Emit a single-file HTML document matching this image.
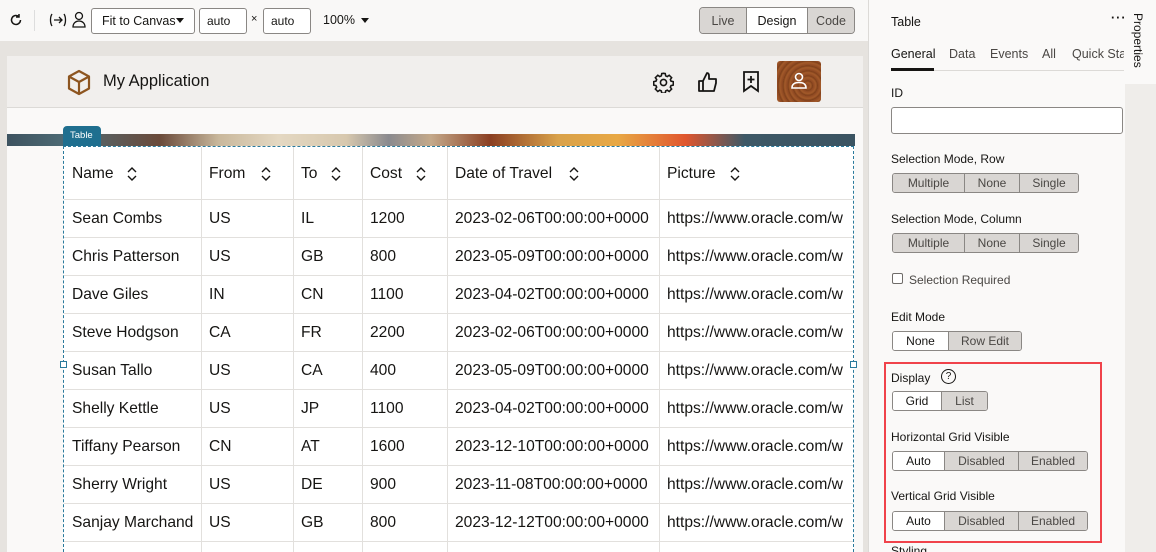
<!DOCTYPE html>
<html><head><meta charset="utf-8"><style>
*{box-sizing:border-box;margin:0;padding:0}
html,body{width:1156px;height:552px;overflow:hidden}
body{position:relative;font-family:"Liberation Sans",sans-serif;background:#e6e3df;color:#161513}
.a{position:absolute}
.t{font-size:12.5px;white-space:nowrap}
.seg{position:absolute;display:flex;height:20px;border:1px solid #8a8784;border-radius:3px;overflow:hidden;font-size:12px}
.seg div{background:#d9d6d3;color:#4a4744;display:flex;align-items:center;justify-content:center;border-left:1px solid #8a8784}
.seg div:first-child{border-left:none}
.seg div.on{background:#fff;color:#161513}
.lbl{position:absolute;font-size:12px;color:#161513}
.cell{position:absolute;font-size:15.6px;color:#161513;white-space:nowrap}
.srt{position:absolute}
</style></head><body>
<!-- toolbar -->
<div class="a" style="left:0;top:0;width:869px;height:41px;background:#f9f8f7"></div>
<svg class="a" style="left:9px;top:13px" width="14" height="14" viewBox="0 0 14 14"><path d="M11.5 7a4.5 4.5 0 1 1-1.5-3.4" fill="none" stroke="#161513" stroke-width="1.5"/><path d="M10 1v3h-3" fill="none" stroke="#161513" stroke-width="1.5"/></svg>
<div class="a" style="left:34px;top:10px;width:1px;height:21px;background:#ddd"></div>
<svg class="a" style="left:49px;top:13px" width="18" height="14" viewBox="0 0 18 14"><path d="M3 1C1 4 1 10 3 13 M15 1c2 3 2 9 0 12 M5 7h8 M10 4l3 3-3 3" fill="none" stroke="#161513" stroke-width="1.3"/></svg>
<svg class="a" style="left:72px;top:11px" width="14" height="17" viewBox="0 0 14 17"><circle cx="7" cy="5" r="3.5" fill="none" stroke="#161513" stroke-width="1.3"/><path d="M1 16c0-4 3-6 6-6s6 2 6 6z" fill="none" stroke="#161513" stroke-width="1.3"/></svg>
<div class="a" style="left:91px;top:8px;width:104px;height:26px;border:1px solid #8a8784;border-radius:3px;background:#fff"></div>
<div class="a t" style="left:102px;top:14px">Fit to Canvas</div>
<div class="a" style="left:176px;top:18px;border:4px solid transparent;border-top:5px solid #161513"></div>
<div class="a" style="left:199px;top:8px;width:48px;height:26px;border:1px solid #8a8784;border-radius:3px;background:#fff"></div>
<div class="a t" style="left:207px;top:14px;font-size:12px">auto</div>
<div class="a t" style="left:251px;top:13px;font-size:11px">×</div>
<div class="a" style="left:263px;top:8px;width:48px;height:26px;border:1px solid #8a8784;border-radius:3px;background:#fff"></div>
<div class="a t" style="left:271px;top:14px;font-size:12px">auto</div>
<div class="a t" style="left:323px;top:13px;font-size:12.5px">100%</div>
<div class="a" style="left:361px;top:18px;border:4px solid transparent;border-top:5px solid #161513"></div>
<div class="seg" style="left:699px;top:7px;height:27px;font-size:12.5px;border-radius:4px"><div style="width:46px">Live</div><div class="on" style="width:61px">Design</div><div style="width:47px">Code</div></div>
<!-- app -->
<div class="a" style="left:7px;top:56px;width:856px;height:496px;background:#faf9f8"></div>
<div class="a" style="left:7px;top:56px;width:856px;height:52px;background:#f1efed;border-bottom:1px solid #dcdad7"></div>
<svg class="a" style="left:66px;top:69px" width="26" height="27" viewBox="0 0 26 27"><path d="M13 2l10 5.5v12L13 25 3 19.5v-12z M3 7.5l10 5.5 10-5.5 M13 13v12" fill="none" stroke="#8d5520" stroke-width="2.2" stroke-linejoin="round"/></svg>
<div class="a" style="left:103px;top:72px;font-size:16.5px">My Application</div>
<svg class="a" style="left:653px;top:72px" width="21" height="21" viewBox="0 0 24 24"><path d="M12 1.5l2 .3.5 2.6 1.8.8 2.2-1.5 2.8 2.8-1.5 2.2.8 1.8 2.6.5v4l-2.6.5-.8 1.8 1.5 2.2-2.8 2.8-2.2-1.5-1.8.8-.5 2.6h-4l-.5-2.6-1.8-.8-2.2 1.5-2.8-2.8 1.5-2.2-.8-1.8-2.6-.5v-4l2.6-.5.8-1.8-1.5-2.2 2.8-2.8 2.2 1.5 1.8-.8.5-2.6z" fill="none" stroke="#161513" stroke-width="1.8"/><circle cx="12" cy="12" r="3.5" fill="none" stroke="#161513" stroke-width="1.8"/></svg>
<svg class="a" style="left:697px;top:71px" width="22" height="22" viewBox="0 0 22 22"><path d="M2 10h4v10H2z M6 10l4-8c2 0 2 2 2 3v3h7v4l-2 8H6" fill="none" stroke="#161513" stroke-width="1.8" stroke-linejoin="round"/></svg>
<svg class="a" style="left:742px;top:71px" width="18" height="22" viewBox="0 0 18 22"><path d="M2 1h14v19l-7-5-7 5z M9 5v7 M5.5 8.5h7" fill="none" stroke="#161513" stroke-width="1.8"/></svg>
<div class="a" style="left:777px;top:61px;width:44px;height:41px;border-radius:3px;background:repeating-radial-gradient(circle at 70% 60%,#8a4520 0,#a35a2a 3px,#7a3d18 5px)"></div>
<svg class="a" style="left:790px;top:71px" width="18" height="20" viewBox="0 0 18 20"><circle cx="9" cy="6" r="3.5" fill="none" stroke="#fff" stroke-width="1.6"/><path d="M2 17c0-4 3-5.5 7-5.5s7 1.5 7 5.5z" fill="none" stroke="#fff" stroke-width="1.6"/></svg>
<!-- banner -->
<div class="a" style="left:7px;top:134px;width:848px;height:12px;background:linear-gradient(90deg,#3d5360 0,#4e6b75 7%,#6a4a3a 18%,#c9b89c 25%,#e4d8c2 32%,#d7c8ae 40%,#8a8a8e 45%,#c4a98a 50%,#8a3f22 57%,#d9a24a 65%,#e8a844 72%,#e0562e 80%,#3d5866 87%,#3b5462 100%)"></div>
<div class="a" style="left:63px;top:126px;width:38px;height:20px;background:#1f6f8f;border-radius:4px 4px 0 0;color:#fff;font-size:9.5px;padding:4px 0 0 7px">Table</div>
<!-- table -->
<div class="a" style="left:63px;top:146px;width:791px;height:406px;background:#fff;border-left:1px dashed #2a7a9c;border-top:1px dashed #2a7a9c;border-right:1px dashed #2a7a9c"></div>
<div class="a" style="left:60px;top:361px;width:7px;height:7px;border:1px solid #2a7a9c;background:#fff"></div>
<div class="a" style="left:850px;top:361px;width:7px;height:7px;border:1px solid #2a7a9c;background:#fff"></div>
<div id="tbl"></div>
<script>
var cols=[64,201,293,362,447,659],h=["Name","From","To","Cost","Date of Travel","Picture"],ar=[126,260,330,415,568,729];
var rows=[["Sean Combs","US","IL","1200"],["Chris Patterson","US","GB","800"],["Dave Giles","IN","CN","1100"],["Steve Hodgson","CA","FR","2200"],["Susan Tallo","US","CA","400"],["Shelly Kettle","US","JP","1100"],["Tiffany Pearson","CN","AT","1600"],["Sherry Wright","US","DE","900"],["Sanjay Marchand","US","GB","800"]];
var dates=["2023-02-06","2023-05-09","2023-04-02","2023-02-06","2023-05-09","2023-04-02","2023-12-10","2023-11-08","2023-12-12"];
var s="";
for(var i=1;i<6;i++)s+='<div class="a" style="left:'+cols[i]+'px;top:147px;width:1px;height:405px;background:#e2e0dd"></div>';
for(var i=0;i<6;i++){s+='<div class="cell" style="left:'+(cols[i]+8)+'px;top:165px">'+h[i]+'</div>';
s+='<svg class="srt" style="left:'+ar[i]+'px;top:166px" width="12" height="16" viewBox="0 0 12 16"><path d="M2 6l4-4 4 4 M2 10l4 4 4-4" fill="none" stroke="#161513" stroke-width="1.4"/></svg>';}
s+='<div class="a" style="left:64px;top:199px;width:789px;height:1px;background:#e2e0dd"></div>';
for(var r=0;r<9;r++){var y=199+38*r;var d=rows[r].concat([dates[r]+"T00:00:00+0000","https://www.oracle.com/w"]);
for(var i=0;i<6;i++)s+='<div class="cell" style="left:'+(cols[i]+8)+'px;top:'+(y+11)+'px;'+(i==5?'width:186px;overflow:hidden':'')+'">'+d[i]+'</div>';
s+='<div class="a" style="left:64px;top:'+(y+38)+'px;width:789px;height:1px;background:#e2e0dd"></div>';}
document.getElementById("tbl").innerHTML=s;
</script>
<!-- right panel -->
<div class="a" style="left:868px;top:0;width:1px;height:552px;background:#dcdad7"></div>
<div class="a" style="left:869px;top:0;width:287px;height:552px;background:#faf9f8"></div>
<div class="a" style="left:1125px;top:84px;width:31px;height:468px;background:#efedea"></div>
<div class="a" style="left:1131px;top:13px;font-size:12px;transform-origin:0 0;transform:translate(14px,0) rotate(90deg);white-space:nowrap">Properties</div>
<div class="a t" style="left:891px;top:15px;font-size:12.5px">Table</div>
<div class="a t" style="left:1111px;top:11px;font-weight:bold;letter-spacing:1px">···</div>
<div class="a t" style="left:891px;top:47px">General</div>
<div class="a t" style="left:949px;top:47px;color:#4a4744">Data</div>
<div class="a t" style="left:990px;top:47px;color:#4a4744">Events</div>
<div class="a t" style="left:1042px;top:47px;color:#4a4744">All</div>
<div class="a t" style="left:1072px;top:47px;color:#4a4744;width:52px;overflow:hidden">Quick Sta</div>
<div class="a" style="left:891px;top:70px;width:233px;height:1px;background:#dcdad7"></div>
<div class="a" style="left:891px;top:68px;width:43px;height:3px;background:#161513"></div>
<div class="lbl" style="left:891px;top:86px">ID</div>
<div class="a" style="left:891px;top:107px;width:232px;height:27px;border:1px solid #8a8784;border-radius:3px;background:#fff"></div>
<div class="lbl" style="left:891px;top:152px">Selection Mode, Row</div>
<div class="seg" style="left:892px;top:173px"><div style="width:71px">Multiple</div><div style="width:55px">None</div><div style="width:59px">Single</div></div>
<div class="lbl" style="left:891px;top:212px">Selection Mode, Column</div>
<div class="seg" style="left:892px;top:233px"><div style="width:71px">Multiple</div><div style="width:55px">None</div><div style="width:59px">Single</div></div>
<div class="a" style="left:892px;top:273px;width:11px;height:11px;border:1px solid #6f6c69;border-radius:2px;background:#fff"></div>
<div class="lbl" style="left:909px;top:273px;color:#4a4744">Selection Required</div>
<div class="lbl" style="left:891px;top:310px">Edit Mode</div>
<div class="seg" style="left:892px;top:331px"><div class="on" style="width:55px">None</div><div style="width:73px">Row Edit</div></div>
<div class="a" style="left:884px;top:362px;width:218px;height:181px;border:2px solid #f0434b"></div>
<div class="lbl" style="left:891px;top:371px">Display</div>
<div class="a" style="left:941px;top:369px;width:15px;height:15px;border:1.3px solid #161513;border-radius:50%;font-size:10px;text-align:center;line-height:13px">?</div>
<div class="seg" style="left:892px;top:391px"><div class="on" style="width:48px">Grid</div><div style="width:46px">List</div></div>
<div class="lbl" style="left:891px;top:430px">Horizontal Grid Visible</div>
<div class="seg" style="left:892px;top:451px"><div class="on" style="width:51px">Auto</div><div style="width:74px">Disabled</div><div style="width:69px">Enabled</div></div>
<div class="lbl" style="left:891px;top:489px">Vertical Grid Visible</div>
<div class="seg" style="left:892px;top:511px"><div class="on" style="width:51px">Auto</div><div style="width:74px">Disabled</div><div style="width:69px">Enabled</div></div>
<div class="lbl" style="left:891px;top:544px">Styling</div>
</body></html>
